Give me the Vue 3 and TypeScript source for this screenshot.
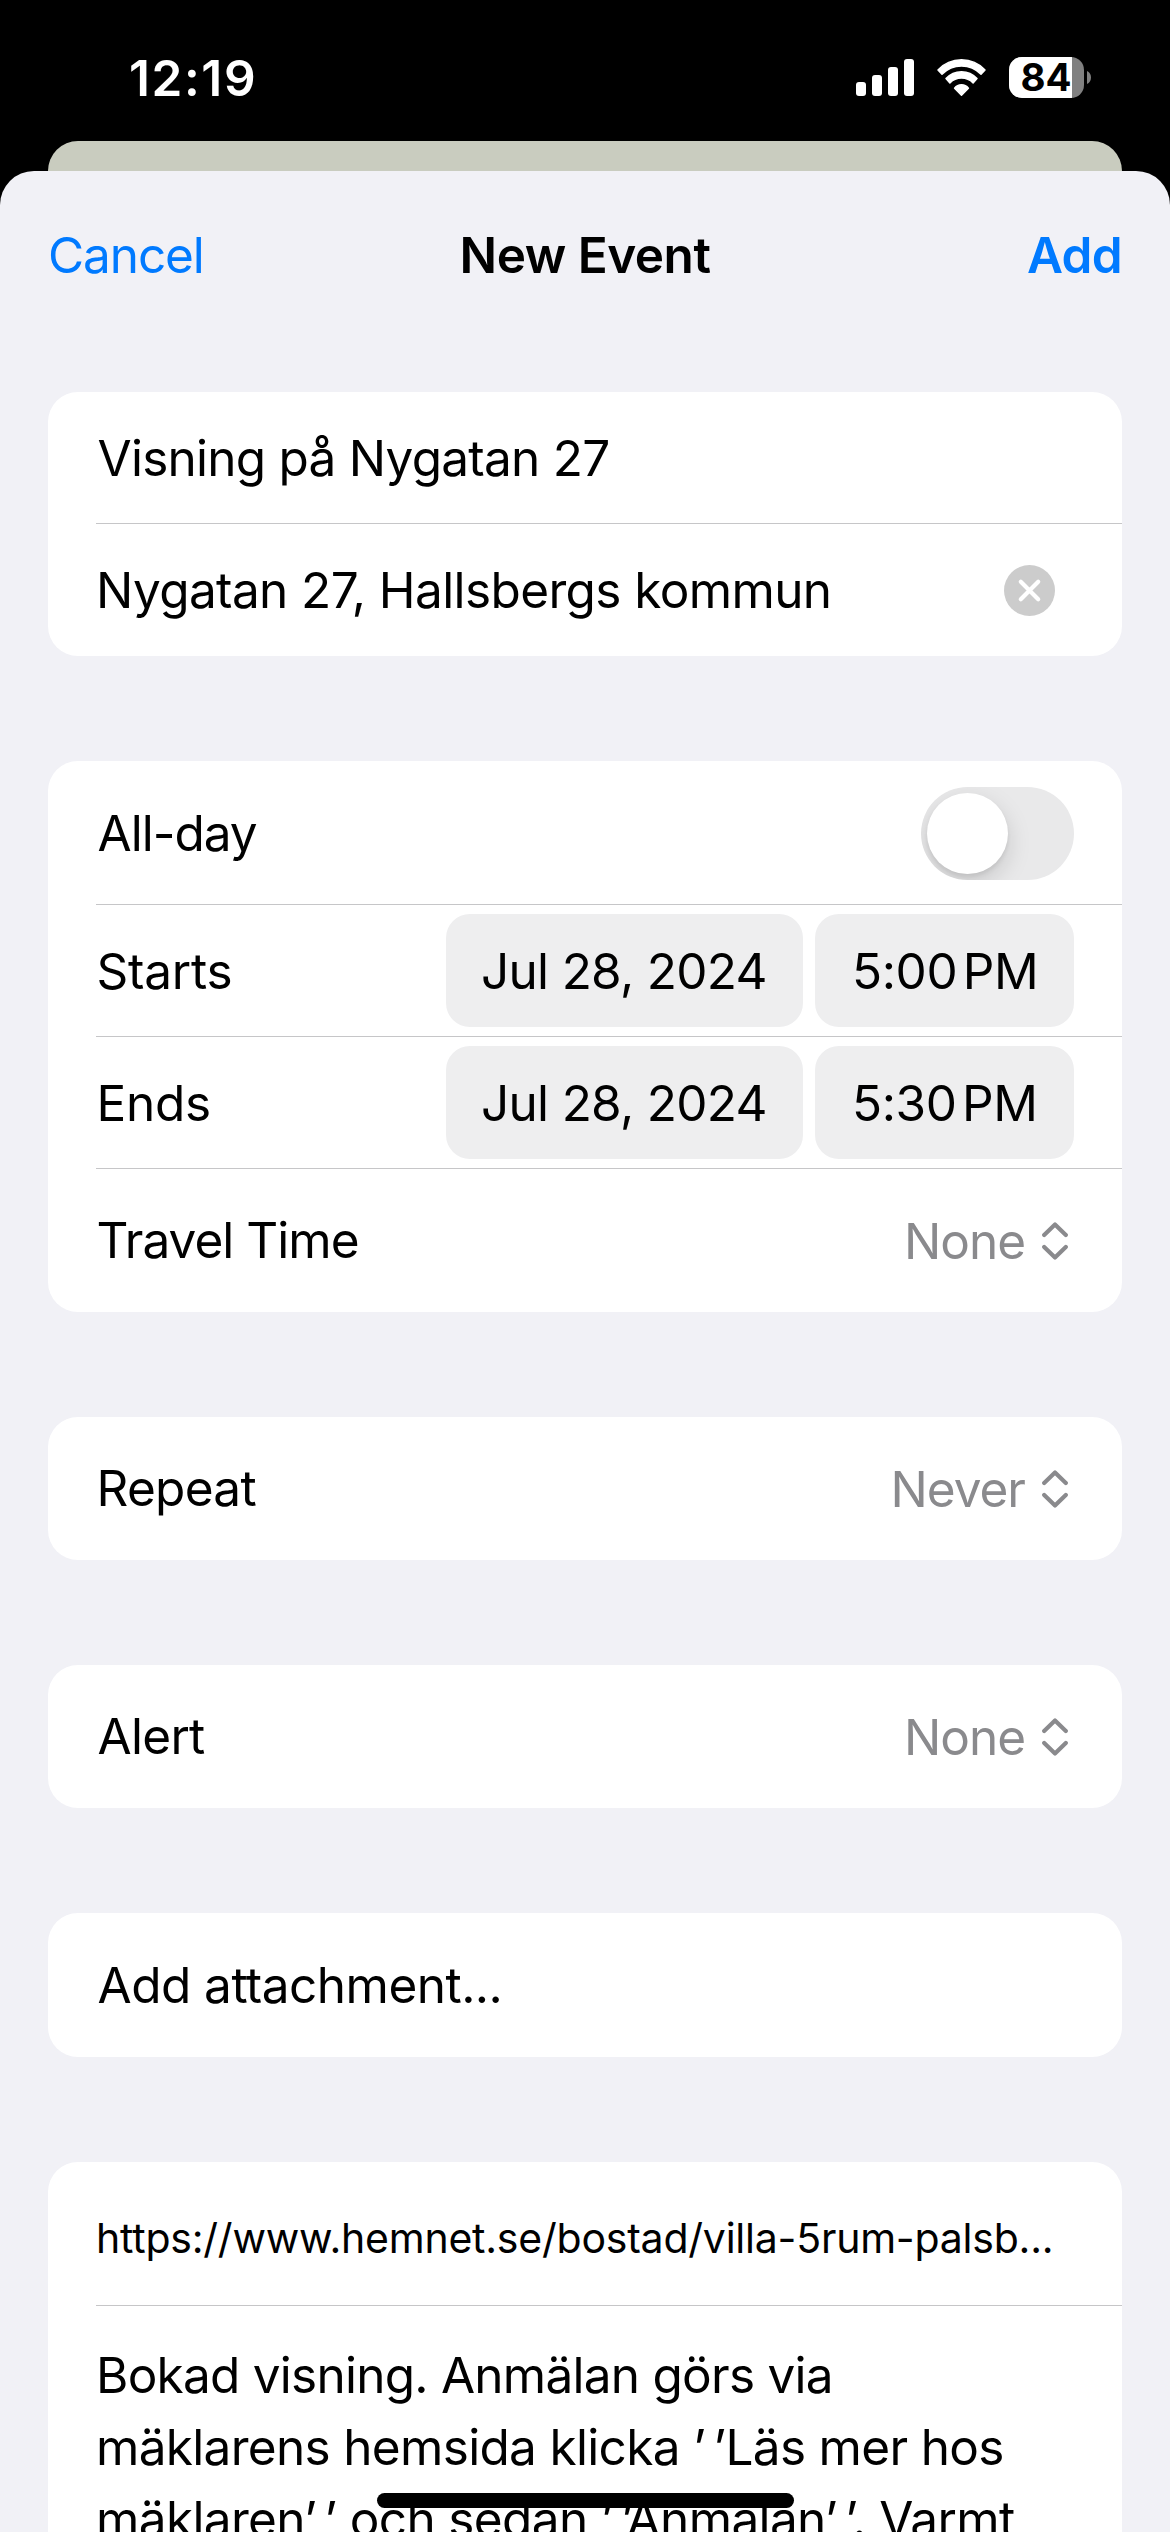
<script setup lang="ts">
import { ref } from 'vue'

interface Moment {
  key: string
  label: string
  date: string
  time: string
  period: string
}

const title = ref('Visning på Nygatan 27')
const location = ref('Nygatan 27, Hallsbergs kommun')
const allDay = ref(false)
const battery = ref(84)

const moments: Moment[] = [
  { key: 'starts', label: 'Starts', date: 'Jul 28, 2024', time: '5:00', period: 'PM' },
  { key: 'ends', label: 'Ends', date: 'Jul 28, 2024', time: '5:30', period: 'PM' },
]

const url = 'https://www.hemnet.se/bostad/villa-5rum-palsb...'
</script>

<template>
  <div class="screen">
    <header class="status">
      <span class="clock">12:19</span>
      <div class="indicators">
        <svg class="signal" width="58" height="38" viewBox="0 0 58 38" fill="#fff">
          <rect x="0" y="24" width="10" height="14" rx="3" />
          <rect x="16" y="17" width="10" height="21" rx="3" />
          <rect x="32" y="9" width="10" height="29" rx="3" />
          <rect x="48" y="1" width="10" height="37" rx="3" />
        </svg>
        <svg class="wifi" width="51" height="39" viewBox="0 0 51 39" fill="#fff" stroke="#fff" stroke-width="1.5" stroke-linejoin="round">
          <path d="M2 12 A32 32 0 0 1 49 12 L45 16.3 A27 27 0 0 0 6 16.3 Z" />
          <path d="M10 20.6 A20.8 20.8 0 0 1 41 20.6 L37.1 24.9 A16.2 16.2 0 0 0 13.9 24.9 Z" />
          <path d="M18.6 30.3 A8.6 8.6 0 0 1 32.4 30.3 L25.5 37.2 Z" />
        </svg>
        <div class="battery">
          <div class="cell"><span class="charge" :style="{ width: battery + '%' }"></span><span class="level">{{ battery }}</span></div>
          <svg width="4" height="13" viewBox="0 0 4 13"><path d="M0 0 C2.4 1 4 3.4 4 6.5 S2.4 12 0 13 Z" fill="#808080" /></svg>
        </div>
      </div>
    </header>

    <div class="backdrop"></div>

    <main class="sheet">
      <nav class="bar">
        <span class="cancel">Cancel</span>
        <span class="heading">New Event</span>
        <span class="add">Add</span>
      </nav>

      <section class="card">
        <div class="row"><span class="event-title">{{ title }}</span></div>
        <div class="row last short">
          <span class="place">{{ location }}</span>
          <svg class="clear" width="51" height="51" viewBox="0 0 51 51">
            <circle cx="25.5" cy="25.5" r="25.5" fill="#cccccc" />
            <path d="M16.8 16.8 L34.2 34.2 M34.2 16.8 L16.8 34.2" stroke="#fff" stroke-width="4.2" stroke-linecap="round" />
          </svg>
        </div>
      </section>

      <section class="card">
        <div class="row tall">
          <span class="all-day">All-day</span>
          <span class="toggle" :class="{ on: allDay }"><span class="knob"></span></span>
        </div>
        <div v-for="m in moments" :key="m.key" class="row">
          <span class="moment">{{ m.label }}</span>
          <div class="pills">
            <span class="pill date">{{ m.date }}</span>
            <span class="pill time"><span>{{ m.time }}</span><span class="period">{{ m.period }}</span></span>
          </div>
        </div>
        <div class="row last">
          <span class="travel">Travel Time</span>
          <span class="value none">None
            <svg class="chevrons" width="26" height="38" viewBox="0 0 26 38"><path d="M2.2 13 L13 2.5 L23.8 13 M2.2 25 L13 35.5 L23.8 25" /></svg>
          </span>
        </div>
      </section>

      <section class="card">
        <div class="row last">
          <span class="repeat">Repeat</span>
          <span class="value never">Never
            <svg class="chevrons" width="26" height="38" viewBox="0 0 26 38"><path d="M2.2 13 L13 2.5 L23.8 13 M2.2 25 L13 35.5 L23.8 25" /></svg>
          </span>
        </div>
      </section>

      <section class="card">
        <div class="row last">
          <span class="alert">Alert</span>
          <span class="value none">None
            <svg class="chevrons" width="26" height="38" viewBox="0 0 26 38"><path d="M2.2 13 L13 2.5 L23.8 13 M2.2 25 L13 35.5 L23.8 25" /></svg>
          </span>
        </div>
      </section>

      <section class="card">
        <div class="row last attachment-row"><span class="attachment">Add attachment...</span></div>
      </section>

      <section class="card details">
        <div class="row tall link-row"><span class="link">{{ url }}</span></div>
        <div class="notes">
          <div class="line first">Bokad visning. Anmälan görs via</div>
          <div class="line">mäklarens hemsida klicka <span class="quote">’</span>’Läs mer hos</div>
          <div class="line third">mäklaren<span class="quote">’</span>’ och sedan <span class="quote">’</span>’Anmälan<span class="quote">’</span>’. Varmt</div>
        </div>
      </section>
    </main>

    <div class="home"></div>
  </div>
</template>

<style>
body {
  margin: 0;
  background: #000;
  overflow: hidden;
}
</style>

<style scoped>
.screen {
  position: relative;
  width: 1170px;
  height: 2532px;
  overflow: hidden;
  display: flex;
  flex-direction: column;
  background: #000;
  color: #000;
  font-family: Inter, 'Liberation Sans', sans-serif;
  font-size: 49.5px;
  letter-spacing: -0.7px;
  white-space: nowrap;
}

.status {
  flex: none;
  height: 141px;
  box-sizing: border-box;
  padding: 0 79px 0 129px;
  display: flex;
  justify-content: space-between;
  color: #fff;
}

.clock {
  line-height: 60px;
  margin-top: 48px;
  font-weight: 600;
  letter-spacing: 1.6px;
}

.indicators {
  display: flex;
  align-items: flex-start;
}

.signal {
  margin-top: 58px;
}

.wifi {
  margin: 58px 22px 0;
}

.battery {
  display: flex;
  align-items: center;
  gap: 3px;
  height: 41px;
  margin-top: 57px;
}

.cell {
  position: relative;
  width: 75px;
  height: 41px;
  border-radius: 13px;
  overflow: hidden;
  background: #808080;
}

.charge {
  position: absolute;
  inset: 0 auto 0 0;
  background: #fff;
}

.level {
  position: absolute;
  left: 11.5px;
  top: 0;
  line-height: 41px;
  font-size: 38.5px;
  font-weight: 650;
  letter-spacing: 0;
  color: #000;
}

.backdrop {
  flex: none;
  height: 70px;
  margin: 0 48px -40px;
  border-radius: 30px 30px 0 0;
  background: #c9ccbf;
}

.sheet {
  position: relative;
  flex: none;
  height: 2361px;
  box-sizing: border-box;
  padding: 0 48px;
  border-radius: 34px 34px 0 0;
  background: #f1f1f6;
  overflow: hidden;
  display: flex;
  flex-direction: column;
  gap: 105px;
}

.bar {
  flex: none;
  display: grid;
  grid-template-columns: 1fr auto 1fr;
  align-items: center;
  height: 168px;
  margin-bottom: -52px;
}

.cancel {
  color: #007aff;
  letter-spacing: -1.1px;
}

.heading {
  font-weight: 600;
  letter-spacing: -0.5px;
}

.add {
  color: #007aff;
  font-weight: 600;
  letter-spacing: -0.7px;
  text-align: right;
}

.card {
  flex: none;
  border-radius: 30px;
  background: #fff;
}

.row {
  display: flex;
  align-items: center;
  justify-content: space-between;
  box-sizing: border-box;
  height: 132px;
  margin-left: 48px;
  padding-right: 48px;
  border-bottom: 1px solid #c6c6c8;
}

.row.tall {
  height: 144px;
}

.row.last {
  height: 143px;
  border-bottom: 0;
}

.row.short {
  height: 132px;
}

.row.attachment-row {
  height: 144px;
}

.event-title {
  letter-spacing: -0.75px;
  margin-left: 1.5px;
}

.place {
  letter-spacing: -0.61px;
}

.clear {
  margin-right: 19px;
}

.all-day {
  letter-spacing: -1px;
  margin-left: 1.5px;
}

.toggle {
  width: 153px;
  height: 93px;
  margin-top: 1px;
  border-radius: 47px;
  background: #e9e9ea;
  display: flex;
  align-items: center;
  box-sizing: border-box;
  padding: 6px;
  overflow: hidden;
}

.toggle.on {
  justify-content: flex-end;
  background: #34c759;
}

.knob {
  width: 81px;
  height: 81px;
  border-radius: 50%;
  background: #fff;
  box-shadow: 0 9px 24px rgba(0, 0, 0, 0.15), 0 3px 4px rgba(0, 0, 0, 0.07);
}

.moment {
  margin-left: 0.5px;
  letter-spacing: -0.24px;
}

.pills {
  display: flex;
  gap: 12px;
}

.pill {
  display: flex;
  align-items: center;
  box-sizing: border-box;
  height: 113px;
  border-radius: 24px;
  background: #eeeeef;
}

.date {
  width: 357px;
  padding-left: 35px;
}

.time {
  width: 259px;
  padding-left: 37px;
  letter-spacing: -0.4px;
}

.period {
  margin-left: 5.5px;
  letter-spacing: -0.4px;
}

.travel {
  letter-spacing: -0.95px;
  margin-left: 0.5px;
  padding-bottom: 2px;
}

.value {
  display: flex;
  align-items: center;
  color: #8a8a8d;
  letter-spacing: -1px;
  padding-top: 1px;
}

.chevrons {
  margin: 0 6px 0 17px;
  fill: none;
  stroke: #8a8a8d;
  stroke-width: 4.2;
  stroke-linecap: round;
  stroke-linejoin: round;
}

.repeat {
  margin-left: 0.5px;
  padding-bottom: 2px;
}

.alert {
  letter-spacing: -0.7px;
  margin-left: 1.5px;
  padding-bottom: 2px;
}

.attachment {
  letter-spacing: -0.52px;
  margin-left: 1.5px;
}

.details {
  height: 460px;
}

.link-row {
  padding-top: 9px;
}

.link {
  font-size: 41px;
  letter-spacing: -0.22px;
}

.notes {
  padding: 33px 48px 0;
}

.line {
  line-height: 72px;
  letter-spacing: -0.68px;
}

.line.first {
  letter-spacing: -0.75px;
}

.line.third {
  letter-spacing: -0.64px;
}

.quote {
  margin-right: 8px;
}

.home {
  position: absolute;
  left: 377px;
  bottom: 24px;
  width: 417px;
  height: 15px;
  border-radius: 8px;
  background: #000;
}
</style>
